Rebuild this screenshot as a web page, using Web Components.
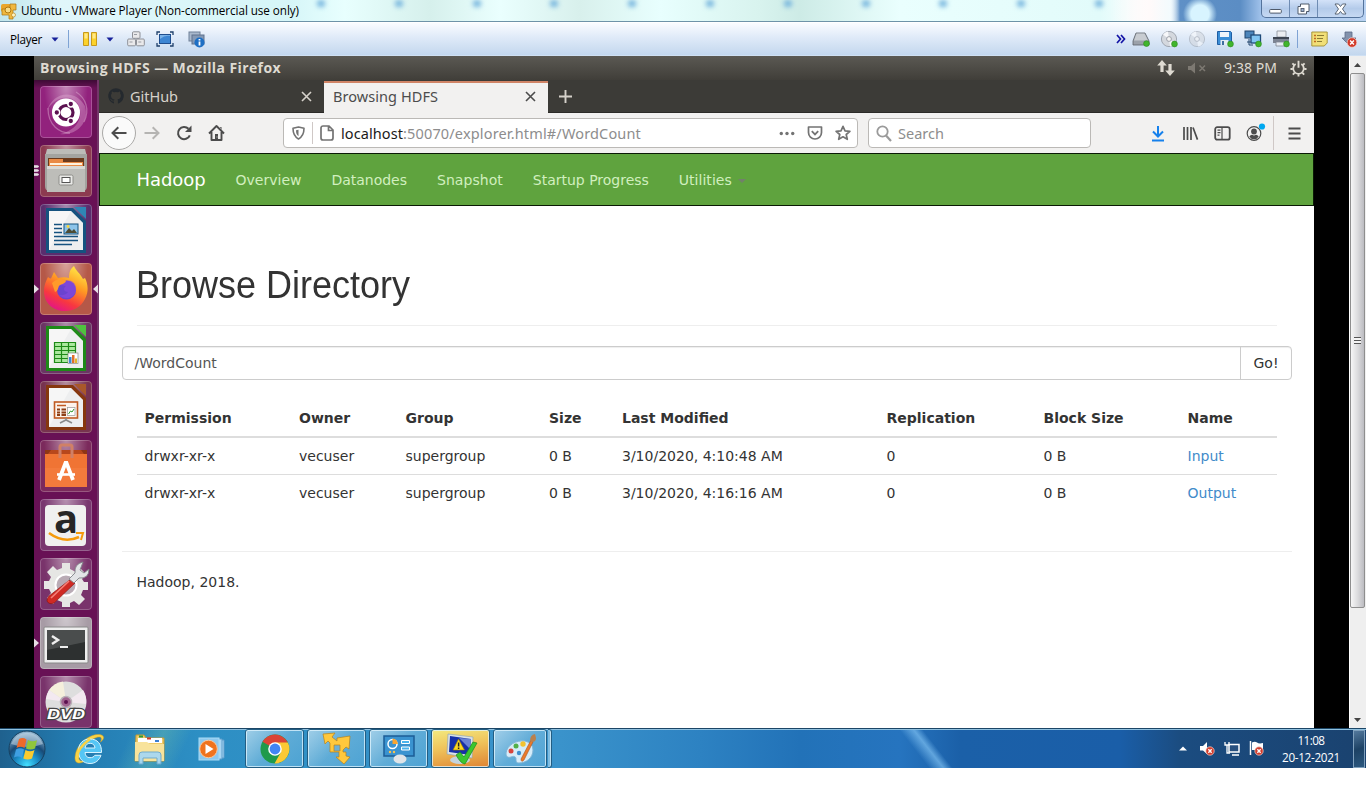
<!DOCTYPE html>
<html lang="en">
<head>
<meta charset="utf-8">
<title>Ubuntu - VMware Player</title>
<style>
html,body{margin:0;padding:0;background:#fff}
body{width:1366px;height:807px;overflow:hidden}
</style>
</head>
<body>
<win-desktop></win-desktop>
<script>
const define = (tag, html) => customElements.define(tag, class extends HTMLElement {
  constructor() {
    super();
    const t = document.createElement('template');
    t.innerHTML = html;
    this.attachShadow({ mode: 'open' }).appendChild(t.content.cloneNode(true));
  }
});

/* Label with a fixed advance width: tracking (or horizontal scale) is adjusted to fill it. */
customElements.define('fit-label', class extends HTMLElement {
  connectedCallback() {
    if (this.shadowRoot) return;
    this.attachShadow({ mode: 'open' }).innerHTML =
      '<style>:host{display:block;flex:none;white-space:pre}span{display:inline-block;transform-origin:0 50%}</style><span><slot></slot></span>';
    requestAnimationFrame(() => this.fit());
    this.fit();
  }
  fit() {
    const w = +this.getAttribute('w');
    const s = this.shadowRoot.querySelector('span');
    this.style.width = w + 'px';
    s.style.letterSpacing = '0px';
    s.style.transform = 'none';
    const real = s.getBoundingClientRect().width;
    if (!real) return;
    if (this.hasAttribute('stretch')) s.style.transform = 'scaleX(' + w / real + ')';
    else s.style.letterSpacing = (w - real) / this.textContent.length + 'px';
  }
});

const doc = (c, d, inner) => `<path d="M6 4h27l13 13v32H6z" fill="${c}"/><path d="M9 7h22l12 12v27H9z" fill="#f6f6f6"/><path d="M31 7l12 12V46H9z" fill="#e4e6e8" opacity=".5"/><path d="M34 3h12v12z" fill="${d}"/>${inner}`;
const green = (x, y) => `<circle cx="${x}" cy="${y}" r="2.9" fill="#41b52c" stroke="#2c8a1d" stroke-width=".6"/>`;
const redx = (x, y, r) => `<circle cx="${x}" cy="${y}" r="${r}" fill="#d23a2a" stroke="#f3d5cf" stroke-width=".7"/><path d="M${x-r*.4} ${y-r*.4}l${r*.8} ${r*.8}m0 ${-r*.8}l${-r*.8} ${r*.8}" stroke="#fff" stroke-width="1.4"/>`;
const disc = o => `<g opacity="${o}"><circle cx="9" cy="9" r="7.6" fill="#d4d8de" stroke="#9298a2" stroke-width=".8"/><path d="M9 9L3 4.500A7.500 7.500 0 0 1 8 1.500zM9 9l6 4.500a7.500 7.500 0 0 1-5 3z" fill="#f7f8fa"/><circle cx="9" cy="9" r="2.4" fill="#f5f5f5" stroke="#8b919b" stroke-width=".8"/></g>`;

const ICONS = {
  vmware: [16,16,`<rect x="0" y="1" width="10" height="8" rx="2" fill="#e9a62b"/><path d="M9 1h6v6h-3v9H8v-4H1V6h8z" fill="#f0b83f" stroke="#a9730e" stroke-width=".7"/><circle cx="7" cy="7" r="3" fill="#f8dc85" stroke="#b0780f"/><circle cx="12.500" cy="12" r="2" fill="#fff3c0" stroke="#b0780f" stroke-width=".6"/>`],
  down: [8,5,`<path d="M.5.5h7L4 4.500z" fill="#17209a"/>`],
  pause: [16,16,`<path d="M1.500 1.500h5v13h-5zM9.500 1.500h5v13h-5z" fill="#fcd22b" stroke="#c79a1c"/><path d="M2.500 2.500h3v5h-3zM10.500 2.500h3v5h-3z" fill="#ffe88a"/>`],
  boxes: [18,16,`<g fill="#e9e9eb" stroke="#85878d" stroke-width=".9"><rect x="5.500" y=".8" width="7.500" height="6.500" rx="1"/><rect x=".7" y="8" width="7.800" height="6.800" rx="1"/><rect x="9.500" y="8" width="7.800" height="6.800" rx="1"/></g><path d="M7 3.500h3M2.500 11h3M11.300 11h3" stroke="#999ca3"/>`],
  full: [18,16,`<rect x="3.500" y="3.500" width="11" height="9" fill="#3d86d3" stroke="#1f4e8e"/><path d="M4 8q5-4 10-3V4H4z" fill="#7ab2e8"/><path d="M1 4V1h3M14 1h3v3M17 12v3h-3M4 15H1v-3" fill="none" stroke="#20406b" stroke-width="1.300"/>`],
  info: [17,17,`<rect x="1" y="1" width="11" height="9" fill="#a9b8cc" stroke="#6f8097"/><rect x="4" y="4" width="12" height="9" fill="#8499b5" stroke="#60738e"/><circle cx="11.500" cy="11.500" r="5" fill="#1e6fc4"/><path d="M11.500 8v1.500M11.500 10.500v4" stroke="#fff" stroke-width="1.800"/>`],
  more: [10,10,`<path d="M1 1l3.500 4L1 9M5 1l3.500 4L5 9" fill="none" stroke="#1414a6" stroke-width="1.700"/>`],
  disk: [18,16,`<path d="M4 2h9l4 8v4H1v-4z" fill="#9ba1a9" stroke="#5c6168" stroke-width=".8"/><path d="M4.500 2.500h8l3.500 7H2z" fill="#c8ccd1"/>${green(14.5,12.6)}`],
  cd: [18,18,disc(1)+green(14.5,14)],
  cd2: [18,18,disc(.6)],
  floppy: [18,18,`<path d="M1.500 1.500h13l1 1v12h-14z" fill="#3b8ed6" stroke="#1f5ea4"/><path d="M4 2h9v5H4z" fill="#eef5fb"/><path d="M4.500 10h8v5h-8z" fill="#e2ebf3"/><path d="M6 11h2v4H6z" fill="#3f6fa0"/>${green(14.5,14)}`],
  net: [18,18,`<rect x="1" y="1" width="9" height="7" fill="#4d85ba" stroke="#21456d"/><path d="M5 9v6h4M3 12h4" stroke="#21456d" fill="none"/><rect x="7" y="5" width="9.500" height="8" fill="#82c5f2" stroke="#1f4a78" stroke-width="1.300"/>${green(14.5,14)}`],
  print: [18,18,`<path d="M5 1h9v6H5z" fill="#eceef2" stroke="#8a8f9a" stroke-width=".8"/><path d="M1 7h16v6H1z" fill="#7c8493"/><path d="M1 7h16v2H1z" fill="#3e4653"/><path d="M4 12h9v4H4z" fill="#e8edf5" stroke="#7e8593" stroke-width=".8"/>${green(14.5,14)}`],
  note: [17,16,`<path d="M.8 1h15.400v11l-3 3H.800z" fill="#f1df77" stroke="#a08f32" stroke-width=".9"/><path d="M3 4.500h2M3 7.500h2M3 10.500h2" stroke="#c26b20" stroke-width="1.400"/><path d="M6 4.500h7M6 7.500h6M6 10.500h5" stroke="#8b7d34"/>`],
  eject: [17,17,`<path d="M4 1h7v6h4l-7 7-7-7h3z" fill="#8292ad" stroke="#5b6a86" stroke-width=".8"/>${redx(11,11.5,4.8)}`],
  wmin: [13,12,`<rect x=".7" y="6.500" width="11.600" height="3.600" rx=".8" fill="#fff" stroke="#4f5a6a"/>`],
  wmax: [13,12,`<path d="M3.500 1h8.500v7.500h-2.500V11H1V3.500h2.500z" fill="#fff" stroke="#4f5a6a"/><rect x="4" y="5.500" width="3" height="3" fill="#9ab0cf" stroke="#4f5a6a" stroke-width=".9"/>`],
  wclose: [13,12,`<path d="M1 1h3.500l2 2.500 2-2.500H12L8.500 6l3.500 5H8.500l-2-2.600L4.500 11H1l3.500-5z" fill="#fff" stroke="#4f5a6a" stroke-width=".9"/>`],
  updown: [18,16,`<path d="M5 0l4.800 5.500H6.600V12H3.400V5.500H.200z" fill="#dfdbd2"/><path d="M13 16l4.800-5.500h-3.200V4h-3.200v6.500H8.200z" fill="#dfdbd2"/>`],
  mute: [18,12,`<path d="M0 4h3l4-3.500v11L3 8H0z" fill="#7d7972"/><path d="M11.500 3.500l5.500 5.500M17 3.500L11.500 9" stroke="#7d7972" stroke-width="1.500"/>`],
  gear: [18,18,`<path d="M6 4.300a5.600 5.600 0 1 0 6 0" fill="none" stroke="#dfdbd2" stroke-width="1.900"/><path d="M9 .8v7.500M9 15v2.500M.5 9.500H3M15 9.500h2.500M2.500 3.500l2 2M15.500 3.500l-2 2M3 15.500l1.800-1.800M15 15.500l-1.800-1.800" stroke="#dfdbd2" stroke-width="2"/>`],
  github: [16,16,`<path d="M8 .2a7.800 7.800 0 0 0-2.500 15.200c.4.100.5-.2.500-.4v-1.500c-2.200.5-2.700-.9-2.700-.9-.3-.9-.9-1.100-.9-1.100-.7-.5.100-.5.100-.5.800.1 1.200.8 1.200.8.700 1.200 1.800.9 2.300.7.100-.5.300-.9.500-1.100-1.700-.2-3.500-.9-3.500-3.900 0-.8.300-1.500.8-2.100-.1-.2-.3-1 .1-2 0 0 .6-.2 2.100.8a7.200 7.200 0 0 1 3.900 0c1.500-1 2.100-.8 2.100-.8.400 1 .2 1.800.1 2 .5.600.8 1.300.8 2.100 0 3-1.800 3.700-3.500 3.900.3.200.5.700.5 1.400V15c0 .2.100.5.600.4A7.800 7.800 0 0 0 8 .2z" fill="#24292e"/>`],
  x: [11,11,`<path d="M1 1l9 9M10 1l-9 9" stroke="currentColor" stroke-width="1.600"/>`],
  plus: [15,15,`<path d="M7.500 1v13M1 7.500h13" stroke="#d5d1ca" stroke-width="1.900"/>`],
  back: [16,14,`<path d="M15.500 7H1.500M7.300 1.200L1.500 7l5.800 5.800" fill="none" stroke="#4c4c4c" stroke-width="2"/>`],
  fwd: [16,14,`<path d="M.5 7h14M8.700 1.200L14.500 7l-5.800 5.800" fill="none" stroke="#b5b4b2" stroke-width="2"/>`],
  reload: [16,16,`<path d="M13.800 10.300A6.100 6.100 0 1 1 12.500 3.800" fill="none" stroke="#4c4c4c" stroke-width="2"/><path d="M15.500.5v6.500H9z" fill="#4c4c4c"/>`],
  home: [17,16,`<path d="M1 8.500L8.500 1 16 8.500M3.500 7v8h10V7" fill="none" stroke="#4c4c4c" stroke-width="1.900" stroke-linejoin="round"/><path d="M7 9h3v6H7zM12 2h1.500v3z" fill="#4c4c4c"/><path d="M9 11.500v1" stroke="#eee" stroke-width=".8"/>`],
  shield: [13,14,`<path d="M6.500 1L12 2.300c0 5.200-1 8.200-5.500 10.700C2 10.500 1 7.500 1 2.300z" fill="none" stroke="#737373" stroke-width="1.600" stroke-linejoin="round"/><path d="M6.500 3.700L4 4.300c0 3 .5 4.500 2.500 6z" fill="#737373"/>`],
  page: [14,16,`<path d="M3 1h6l4 4v8a2 2 0 0 1-2 2H3a2 2 0 0 1-2-2V3a2 2 0 0 1 2-2zM8.500 1v4.500H13" fill="none" stroke="#737373" stroke-width="1.700"/>`],
  dots: [16,5,`<circle cx="2.300" cy="2.500" r="1.700" fill="#737373"/><circle cx="8" cy="2.500" r="1.700" fill="#737373"/><circle cx="13.700" cy="2.500" r="1.700" fill="#737373"/>`],
  pocket: [16,15,`<path d="M1.500 1h13v5.500a6.500 6.500 0 0 1-13 0z" fill="none" stroke="#737373" stroke-width="1.700" stroke-linejoin="round"/><path d="M4.800 5.200L8 8.400l3.200-3.200" fill="none" stroke="#737373" stroke-width="1.800"/>`],
  star: [16,16,`<path d="M8 1.300l2 4.500 4.900.5-3.700 3.200 1.100 4.800L8 11.800l-4.300 2.500 1.100-4.800L1.100 6.300 6 5.800z" fill="none" stroke="#737373" stroke-width="1.700" stroke-linejoin="round"/>`],
  search: [16,17,`<circle cx="6.500" cy="6.500" r="5.200" fill="none" stroke="#9a9a9a" stroke-width="1.800"/><path d="M10 10.500l5 5.500" stroke="#9a9a9a" stroke-width="2.200"/>`],
  dl: [14,17,`<path d="M7 1v10M2 6.500l5 5 5-5M1 15.500h12" fill="none" stroke="#1681ec" stroke-width="2"/>`],
  lib: [17,15,`<path d="M2 1v13M5.500 1v13M9 1v13M11 1.500L15.500 13.600" stroke="#4c4c4c" stroke-width="1.700"/>`],
  side: [17,15,`<rect x="1.200" y="1.200" width="14.500" height="12.500" rx="2" fill="none" stroke="#4c4c4c" stroke-width="1.800"/><path d="M8 1v13M3.500 4.200h3M3.500 6.700h3M3.500 9.200h2" stroke="#4c4c4c" stroke-width="1.200"/>`],
  acct: [22,20,`<circle cx="9" cy="11.500" r="6.800" fill="none" stroke="#4c4c4c" stroke-width="1.200"/><circle cx="9" cy="9.500" r="2.900" fill="#4c4c4c"/><path d="M4.300 14.500q1.500-2 3-1.700 1.700 1.200 3.400 0 1.500-.3 3 1.700A5.400 5.400 0 0 1 4.300 14.500z" fill="#4c4c4c"/><circle cx="17" cy="4.500" r="3.100" fill="#00a8f0"/>`],
  menu: [13,13,`<path d="M.5 1.500h12M.5 6.500h12M.5 11.500h12" stroke="#4c4c4c" stroke-width="1.800"/>`],
  caret: [8,4,`<path d="M0 0h8L4 4z" fill="#777" opacity=".8"/>`],

  ubuntu: [52,52,`<path d="M7 25C12 6 35 2 45 20 50 38 35 50 20 48 38 44 44 30 38 18 28 5 12 14 7 25z" fill="#e8b9dd" opacity=".35"/><path d="M8 22C8 40 20 47 30 47M36 6C46 12 50 24 44 36" fill="none" stroke="#d9a5cc" stroke-width="1.300" opacity=".5"/><circle cx="26" cy="26.500" r="14" fill="#fff"/><circle cx="26" cy="26.500" r="7" fill="none" stroke="#5b1150" stroke-width="3.200"/><g fill="#5b1150" stroke="#fff" stroke-width="1.500"><circle cx="16.800" cy="26.500" r="2.900"/><circle cx="30.800" cy="18" r="2.900"/><circle cx="30.800" cy="35" r="2.900"/></g>`],
  files: [52,52,`<path d="M7 4h38l2 8H5z" fill="#bcbcb8"/><path d="M5 9h42v32q0 4-3 5H8q-3-1-3-5z" fill="#a3a39f"/><path d="M8 13h36v9H8z" fill="#6b3a1c"/><path d="M9 14h14v3h20v5H9z" fill="#e98a45"/><path d="M10 18h32v2H10z" fill="#fff1dc"/><path d="M7 21h38v26H7z" fill="#bdbdb9"/><path d="M7 21h38v3H7z" fill="#d9d9d5"/><rect x="19" y="30" width="14" height="10" rx="1.500" fill="#e9e9e7" stroke="#8c8c88"/><rect x="22" y="32.500" width="8" height="5" fill="#fff" stroke="#555"/>`],
  writer: [52,52,doc('#15527f','#2f86b5',`<path d="M14 20.500h8M14 24.500h8M14 28.500h8M14 32.500h24M14 36.500h24M14 40.500h18" stroke="#15527f" stroke-width="1.700"/><rect x="24" y="20" width="14" height="10" fill="#8cc4ea" stroke="#15527f"/><path d="M25 29l4-5 3 3 2-2 3 4z" fill="#4d4b33"/><circle cx="28" cy="22.500" r="1.400" fill="#f7d63c"/>`)],
  firefox: [52,52,`<defs><linearGradient id="f" x1=".8" y1="0" x2=".3" y2="1"><stop offset="0" stop-color="#fff04a"/><stop offset=".4" stop-color="#ff9a23"/><stop offset=".75" stop-color="#f8383f"/><stop offset="1" stop-color="#e31587"/></linearGradient></defs><path d="M8 14c1 1 2 1.500 3 1.500L14 9l4 6c4-1 8-1 11 0 0-5 1-9 5-12 2 5 6 7 9 13l2-1c3 6 4 14 0 21-4 8-11 12-20 12C13 48 4 40 4 28c0-6 2-10 4-14z" fill="url(#f)"/><circle cx="26.500" cy="27" r="9.500" fill="#6a43cf"/><path d="M26 18c6-2 11 3 10 10-2 8-12 9-17 4 4 1 8-1 9-3-3 0-6-3-2-6-3-1-6 0-8-2 2-2 5-3 8-3z" fill="#8a4be0" opacity=".6"/><path d="M12 20c4-4 11-6 14-2-1 3-5 3-7 5-1 2-1 5-4 6z" fill="#ff9a2a"/>`],
  calc: [52,52,doc('#1d8a17','#4fc23f',`<path d="M14 20h22v21H14z" fill="#abe89f"/><path d="M14.500 20.500h21v20h-21zM14.500 24.500h21M14.500 28.500h21M14.500 32.500h21M14.500 36.500h21M21.500 20v21M28.500 20v21" stroke="#1d8a17" stroke-width="1.200" fill="none"/><rect x="28" y="31" width="10" height="10.500" fill="#fff" stroke="#888" stroke-width=".7"/><path d="M29 35h2.500v6H29z" fill="#3c87d3"/><path d="M32 33h2.500v8H32z" fill="#e0702a"/><path d="M35 36.500h2v4.500h-2z" fill="#e0b52a"/>`)],
  impress: [52,52,doc('#86370e','#a9582a',`<rect x="14.500" y="21" width="23" height="16" fill="#fdf3eb" stroke="#c05a22" stroke-width="1.600"/><path d="M17 24.500h9" stroke="#c05a22" stroke-width="1.500"/><path d="M17 28.500h3M17 31.500h3M17 34h3M21.500 28.500h4.500M21.500 31.500h4.500M21.500 34h4.500" stroke="#8d3f16" stroke-width="1.800"/><rect x="27.500" y="26.500" width="7.500" height="8" fill="#fff" stroke="#999" stroke-width=".7"/><path d="M28.500 33l2-3 1.500 1 2-3" fill="none" stroke="#2e9a2a"/><path d="M26 37v3M20 42l6-3 6 3" stroke="#8a8a8a" stroke-width="1.600" fill="none"/>`)],
  bag: [52,52,`<path d="M5 10h42v37H5z" fill="#f07434"/><path d="M5 10h42v4H5z" fill="#b8481c"/><path d="M5 10h6l-3 4H5zM41 10h6v4h-3z" fill="#8e3516"/><path d="M5 28h42v19H5z" fill="#f58044" opacity=".5"/><path d="M20 18V7q0-2 2-2h8q2 0 2 2v11" fill="none" stroke="#d08066" stroke-width="3"/><g stroke="#fff" fill="none"><path d="M19 40l6.500-17h1L33 40" stroke-width="3.800"/><path d="M17 34.500h18" stroke-width="2.600"/></g>`],
  amazon: [52,52,`<rect x="5" y="6" width="41" height="41" rx="4" fill="#f0f0ef"/><path d="M9 34q15 11 30 4" fill="none" stroke="#f59a0c" stroke-width="2.600"/><path d="M36 34h7l-2 7" fill="none" stroke="#f59a0c" stroke-width="2"/><text x="26" y="34" text-anchor="middle" font-family="Open Sans" font-weight="700" font-size="40" fill="#262626">a</text>`],
  tools: [52,52,`<path d="M22 5h8v6l6 3 4-4 6 6-4 5 2 3h4v8h-5l-2 5 4 4-6 6-5-4-4 2v4h-8v-5l-5-2-4 4-6-6 4-5-2-4H4v-8h5l2-4-4-5 6-6 4 4 5-2z" fill="#e6e6e4"/><circle cx="26" cy="27" r="10.500" fill="#b9abb5" stroke="#fff" stroke-width="2"/><path d="M31 21l4 4-21 20q-5 2-7-2 0-3 2-5z" fill="#cf2a24" stroke="#8e1512" stroke-width=".7"/><path d="M11 40l18-17" stroke="#f58078" stroke-width="1.700"/><path d="M29 21l6-6q-1-9 8-11l-3 8 4 3 5-4q0 10-10 9l-5 5z" fill="#e2e4e6" stroke="#818589" stroke-width=".9"/>`],
  term: [52,52,`<rect x="4" y="10" width="44" height="36" rx="1" fill="#eee" stroke="#888"/><rect x="7" y="13" width="38" height="30" fill="#2d3030"/><path d="M7 13h38v12L7 33z" fill="#5b5e5e" opacity=".65"/><path d="M12 19l6 4-6 4" fill="none" stroke="#eee" stroke-width="2.500"/><path d="M20 30h8" stroke="#eee" stroke-width="2"/>`],
  dvd: [52,52,`<circle cx="26" cy="26" r="20.500" fill="#dedede"/><path d="M26 26L9 14a21 21 0 0 1 14-8.500z" fill="#f5efdc"/><path d="M26 26l17-12a21 21 0 0 1 3 14zM26 26L6 23a21 21 0 0 1 3-9z" fill="#f3e9f0"/><circle cx="26" cy="26" r="5.500" fill="#a0638f" stroke="#b9b0b7" stroke-width="1.500"/><circle cx="26" cy="26" r="2" fill="#5b1150"/><text x="26" y="43" text-anchor="middle" font-family="Liberation Sans" font-style="italic" font-weight="700" font-size="15" textLength="38" lengthAdjust="spacingAndGlyphs" fill="#fff" stroke="#444" stroke-width="2.500" paint-order="stroke">DVD</text>`],

  orb: [38,38,`<defs><radialGradient id="o" cx=".5" cy=".95" r=".9"><stop offset="0" stop-color="#44e0ff"/><stop offset=".35" stop-color="#1c8fc9"/><stop offset=".65" stop-color="#184a77"/><stop offset="1" stop-color="#8fb4cf"/></radialGradient></defs><circle cx="19" cy="19" r="18" fill="url(#o)" stroke="#16405f"/><path d="M3 14a17 17 0 0 1 32 0q-15 6-32 0z" fill="#dbe9f2" opacity=".45"/><path d="M11 9q4-2 7.500.500L16.500 18q-4-2.500-8 0z" fill="#ee6a2b"/><path d="M20 10q4 2.500 9 .3L27 18.500q-4.500 2-9 0z" fill="#8fc73c"/><path d="M8 19.500q4-2.500 8 0L14 28q-3.500-2.500-8-.5z" fill="#3f9fe2"/><path d="M17.500 20q4.500 2.500 9 0L24 28.500q-4.500 2-8.700 0z" fill="#fbcb2f"/>`],
  ie: [34,34,`<path d="M31 4C25-1 8 7 4 20c-2 7-1 11 3 11 2 0 5-1 7-3-5 2-8 1-7-4C9 14 22 4 28 5c2 .5 1.500 3 .5 5 2.500-2 4-4 2.500-6z" fill="#f8d246" stroke="#d9a31c" stroke-width=".5"/><path d="M29.500 20.500H13c.3 3.500 2 5.200 5 5.200 2.300 0 4-.9 4.800-2.400h6.200C27 28.500 23.500 31.500 18 31.500 11 31.500 6.500 26.500 6.500 19 6.500 11.500 11 7 18 7c7.500 0 11.800 5 11.500 13.500zM13 16h10c-.3-3-2-4.700-4.900-4.700S13.400 13 13 16z" fill="#55c6f5" stroke="#d9f4ff" stroke-width="1"/><path d="M5 26c0-7 6-14 13-19" fill="none" stroke="#f8d246" stroke-width="2.600"/>`],
  explorer: [34,32,`<path d="M3 2h8l2 3h18v23H2z" fill="#efcb68" stroke="#c39a35"/><path d="M5 5h24v5H5z" fill="#fff"/><path d="M6 3.500h4" stroke="#2a9a3d" stroke-width="2"/><path d="M14 5.500h4" stroke="#d33a2a" stroke-width="2"/><path d="M22 8h4" stroke="#3c7fd3" stroke-width="2"/><path d="M2 9l12 0 3 2h14v17H2z" fill="#f8e39b"/><path d="M6 31V22q0-3 3-3h16q3 0 3 3v9h-4v-6H10v6z" fill="#a8d8f2" stroke="#6aa9cf" opacity=".95"/>`],
  wmp: [28,26,`<path d="M20 3h4v20h-4M24 4h2v18h-2" fill="#a9d6f3" stroke="#5a9ccb"/><rect x="1" y="2" width="20" height="22" fill="#8cc8ee" stroke="#a9dbf5"/><circle cx="10.500" cy="13" r="8.800" fill="#f0731d" stroke="#f8c9a0"/><path d="M7.500 8l8 5-8 5z" fill="#fff"/>`],
  chrome: [30,30,`<circle cx="15" cy="15" r="14.500" fill="#1f9a4c"/><path d="M15 15L2.500 7.700A14.500 14.500 0 0 1 27.600 8z" fill="#db4437"/><path d="M15 8.500h12.900A14.500 14.500 0 0 1 14.500 29.500L21 18z" fill="#fcc934"/><circle cx="15" cy="15" r="6.800" fill="#fff"/><circle cx="15" cy="15" r="5.400" fill="#4285f4"/>`],
  vmbig: [28,33,`<g stroke="#b98318" stroke-width=".7" fill="#ffc83d"><path d="M0 2l12-1-3 4 5 4V6l13-2-1 13-3-2-3 3v2h3v4l4 1-6 7-8-7h3v-5H7v-9L5 9l-3 3z"/><path d="M11 13h6v6h-6z" fill="#6db0d6"/></g>`],
  panel: [32,30,`<path d="M1 2h30v20H1z" fill="#3a93d0" stroke="#1d5d96" stroke-width="1.500"/><circle cx="9.500" cy="10" r="4.500" fill="none" stroke="#fff" stroke-width="1.500"/><path d="M9.500 10V4.500a5.500 5.500 0 0 1 5.300 5.500z" fill="#f8a42f"/><path d="M18.500 6.500h8v3h-8zM18.500 13h8v3h-8z" fill="#4ab4ee" stroke="#fff"/><circle cx="7" cy="18" r="1.200" fill="#f8c24f"/><circle cx="11" cy="18" r="1.200" fill="#f8c24f"/><ellipse cx="17" cy="25" rx="6.500" ry="4.500" fill="#dfe4e8"/>`],
  warn: [32,32,`<ellipse cx="15" cy="27" rx="10" ry="4" fill="#c4d3dc"/><path d="M3 1l25 3-1 21-25-4z" fill="#dae3e8" stroke="#93a7b3" stroke-width=".7"/><path d="M5 3l21 3-1 16-21-3z" fill="#1730a8"/><path d="M14 5l12 1-1 10z" fill="#8fa7e6" opacity=".7"/><path d="M13.500 6l6 11H8z" fill="#ffd91f" stroke="#9a7b00" stroke-width=".6"/><path d="M13.600 9.500v4M13.600 14.500v1.500" stroke="#222" stroke-width="1.500"/><path d="M11 22l4-3 4 5 9-15 4 1-12 21q-4 0-9-9z" fill="#3bc72f" stroke="#1f8a18" stroke-width=".7"/>`],
  paint: [32,32,`<path d="M2 20C3 12 12 7 21 8q8 2 8 9c0 8-7 13-14 13-3 0-3-2-3-4 0-3-3-3-5-2-3 1-5 0-5-4z" fill="#d5ecf9" stroke="#7fb4d6"/><circle cx="7" cy="18" r="2.500" fill="#d9443c"/><circle cx="12" cy="13" r="2.500" fill="#51b04a"/><circle cx="19" cy="11" r="2.700" fill="#f2c230"/><circle cx="15" cy="20" r="2.200" fill="#3e8fce"/><path d="M27 7l2 2-9 18q-3 3-3-1z" fill="#eb7a2c" stroke="#9c4b14" stroke-width=".5"/><path d="M26 8q0-6 5-7l1 4q0 4-4 4z" fill="#b9814e"/>`],
  trayup: [8,5,`<path d="M4 .5L8 4.500H0z" fill="#fff"/>`],
  speaker: [15,15,`<path d="M0 5h3l4-4v12L3 9.500H0z" fill="#fff"/>${redx(10,10,4.2)}`],
  lan: [16,15,`<rect x="5" y="3.500" width="10" height="7.500" fill="#28507f" stroke="#fff" stroke-width="1.500"/><path d="M8 14h7M1 1v3h4V1M3 4v8h3" stroke="#fff" stroke-width="1.300" fill="none"/>`],
  flag: [15,15,`<path d="M1.500 0v14" stroke="#fff" stroke-width="1.500"/><path d="M3 1.500q3-1.500 5 0 2 1.500 6 .5v7H3z" fill="#fff"/>${redx(10,10,4.2)}`],
  sup: [7,4,`<path d="M3.500 0L7 4H0z" fill="#444"/>`],
  sdown: [7,4,`<path d="M3.500 4L0 0h7z" fill="#444"/>`]
};

customElements.define('ui-icon', class extends HTMLElement {
  connectedCallback() {
    const [w, h, body] = ICONS[this.getAttribute('name')];
    const W = this.getAttribute('w') || w, H = this.getAttribute('h') || h;
    const r = this.shadowRoot || this.attachShadow({ mode: 'open' });
    r.innerHTML = `<style>:host{display:flex;flex:none;align-items:center;justify-content:center}svg{display:block;flex:none;overflow:visible}</style><svg width="${W}" height="${H}" viewBox="0 0 ${w} ${h}">${body}</svg>`;
  }
});

define('vm-titlebar', `<style>
:host{display:flex;align-items:center;height:22px;box-sizing:border-box;border-bottom:1px solid #6e93a8;overflow:hidden;color:#000;font:11.700px/21px "Open Sans",sans-serif;
background:
radial-gradient(circle at 1200px 14px,#d8f4ff 0 9px,transparent 17px),
radial-gradient(ellipse at 1114px 17px,#8ed3ea 0 3px,transparent 10px),
radial-gradient(ellipse at 882px 17px,#d392d8 0 3px,transparent 9px),
radial-gradient(ellipse at 729px 17px,#b9cff0 0 2px,transparent 8px),
radial-gradient(ellipse at 493px 17px,#bdaedf 0 3px,transparent 10px),
radial-gradient(ellipse at 416px 16px,#9bc4f0 0 3px,transparent 11px),
linear-gradient(90deg,transparent 1110px,#fffafa 1150px,#f4fbfd 1168px,transparent 1180px),
linear-gradient(90deg,#c2e6ec 0,#e0f6fa 60px,#d6f6f8 290px,#e8fffe 345px,#d6f0ec 430px,#eafffe 500px,#d8f0ec 580px,#e8fffe 660px,#d8f3ee 760px,#cdebe6 800px,#eafffe 900px,#e2fbfa 1100px,#fff 1150px,#f1fbff 1170px,#5f90c6 1180px,#5b8dc4 1240px,#a3c4ec 1262px,#b9d2f2 1366px)}
.spots{display:flex;align-self:flex-start;flex:1;gap:69.800px;padding-left:18px}
.spots i{flex:none;width:8px;height:7px;border-radius:50%;background:#6fb0dc;filter:blur(2.500px)}
ui-icon{width:18px;margin-right:3px}
.ctl{display:flex;align-self:flex-start;flex:none;width:101px;height:17px;border:1px solid #54739c;border-top:0;border-radius:0 0 5px 5px;margin-right:2px;background:linear-gradient(#d3e2f8,#b4cbea 50%,#c6d9f3)}
.ctl ui-icon{margin:0;flex:0 0 27px;border-right:1px solid #6f8cb3}
.ctl ui-icon:last-child{flex:1;border:0}
</style><ui-icon name="vmware"></ui-icon><fit-label w="278">Ubuntu - VMware Player (Non-commercial use only)</fit-label><div class="spots"><i></i><i></i><i></i><i></i><i></i><i></i><i></i><i></i><i></i><i></i><i></i></div>
<div class="ctl"><ui-icon name="wmin"></ui-icon><ui-icon name="wmax"></ui-icon><ui-icon name="wclose"></ui-icon></div>`);

define('vm-toolbar', `<style>
:host{display:flex;align-items:center;height:34px;box-sizing:border-box;border-top:1px solid #fff;border-bottom:1px solid #cfe0f3;background:linear-gradient(#fafcff,#dfeaf8 45%,#c3d7ee);padding:0 0 0 10px;font:11.700px/32px "Open Sans",sans-serif;color:#000}
hr{border:0;margin:0;width:1px;height:18px;background:#7fa3d4;flex:none}
.g{flex:1}
</style><fit-label w="32">Player</fit-label><ui-icon name="down" style="width:26px"></ui-icon><hr>
<ui-icon name="pause" style="width:42px"></ui-icon><ui-icon name="down" style="margin:0 13px 0 -5px"></ui-icon><ui-icon name="boxes" style="width:18px"></ui-icon><ui-icon name="full" style="width:40px"></ui-icon><ui-icon name="info" style="width:22px"></ui-icon><div class="g"></div>
<ui-icon name="more" style="width:13px"></ui-icon><ui-icon name="disk" style="width:28px"></ui-icon><ui-icon name="cd" style="width:28px"></ui-icon><ui-icon name="cd2" style="width:28px"></ui-icon><ui-icon name="floppy" style="width:28px"></ui-icon><ui-icon name="net" style="width:28px"></ui-icon><ui-icon name="print" style="width:28px"></ui-icon><hr style="margin:0 7px 0 2px"><ui-icon name="note" style="width:28px"></ui-icon><ui-icon name="eject" style="width:33px"></ui-icon>`);

define('ubuntu-panel', `<style>
:host{display:flex;align-items:center;height:24px;background:linear-gradient(#5b5953,#403e39);padding:0 7px 0 6px;color:#dfdbd2;font:14px/24px "Noto Sans",sans-serif}
.t{font-weight:700;font-size:14px;font-family:"Open Sans",sans-serif}
</style><fit-label class="t" w="241">Browsing HDFS — Mozilla Firefox</fit-label><div style="flex:1"></div><ui-icon name="updown"></ui-icon><ui-icon name="mute" style="margin:0 18px 0 13px"></ui-icon><fit-label w="53">9:38 PM</fit-label><ui-icon name="gear" w="17" h="17" style="margin-left:13px"></ui-icon>`);

customElements.define('launcher-item', class extends HTMLElement {
  connectedCallback() {
    const m = this.getAttribute('mark') || '';
    const r = this.shadowRoot || this.attachShadow({ mode: 'open' });
    r.innerHTML = `<style>:host{display:grid;grid-template-columns:6px 52px 7px;height:52px;align-items:center}
.t{width:52px;height:52px;box-sizing:border-box;border-radius:4px;background:radial-gradient(ellipse at 50% 0,rgba(255,255,255,.45),rgba(255,255,255,0) 60%),var(--tile,#79366f);box-shadow:inset 0 0 0 1px rgba(255,255,255,.22)}
svg{display:block}</style>
<svg width="6" height="14">${m.includes('l') ? '<path d="M0 2.500l5 4.500-5 4.500z" fill="#e6dde4"/>' : m.includes('m') ? '<path d="M0 1.500h3.500l1.500 1-1.500 1H0zM0 5.500h3.500l1.500 1-1.500 1H0zM0 9.500h3.500l1.500 1-1.500 1H0z" fill="#e6dde4" stroke="#e6dde4" stroke-width=".6"/>' : ''}</svg>
<div class="t"><ui-icon name="${this.getAttribute('icon')}"></ui-icon></div>
<svg width="7" height="14">${m.includes('r') ? '<path d="M6 2.500L1 7l5 4.500z" fill="#e6dde4"/>' : ''}</svg>`;
  }
});

define('unity-launcher', `<style>
:host{display:flex;flex-direction:column;gap:7px;width:65px;box-sizing:border-box;padding-top:6px;overflow:hidden;background:linear-gradient(#3d0b35,#681155 8px,#681155);box-shadow:inset -2px 0 0 #74366a}
launcher-item{flex:none}
</style>
<launcher-item icon="ubuntu" style="--tile:#92227d"></launcher-item>
<launcher-item icon="files" mark="m" style="--tile:#8c3a50"></launcher-item>
<launcher-item icon="writer" style="--tile:#5a2d6e"></launcher-item>
<launcher-item icon="firefox" mark="lr" style="--tile:#b55848"></launcher-item>
<launcher-item icon="calc" style="--tile:#6a3563"></launcher-item>
<launcher-item icon="impress" style="--tile:#77334f"></launcher-item>
<launcher-item icon="bag" style="--tile:#7b2a5c"></launcher-item>
<launcher-item icon="amazon" style="--tile:#79366f"></launcher-item>
<launcher-item icon="tools" style="--tile:#79336b"></launcher-item>
<launcher-item icon="term" mark="l" style="--tile:#a79ba5"></launcher-item>
<launcher-item icon="dvd" style="--tile:#79336b"></launcher-item>`);

define('fx-tabs', `<style>
:host{display:flex;height:33px;background:#3c3b37;box-shadow:inset 0 -1px 0 #2b2a27;font:14.500px/30px "Noto Sans",sans-serif;color:#d6d2cb}
.t{display:flex;align-items:center;box-sizing:border-box;width:225px;padding:0 12px 1px 9px}
.t ui-icon:last-child{margin-left:auto}
.a{background:linear-gradient(#3c3b37 0 1px,#d08466 1px 3px,#f2f1f0 3px);color:#4c4c4c;width:224px}
ui-icon[name=x]{padding-top:1px}
</style><div class="t"><ui-icon name="github" style="margin-right:6px"></ui-icon><fit-label w="48">GitHub</fit-label><ui-icon name="x"></ui-icon></div>
<div class="t a"><fit-label w="105">Browsing HDFS</fit-label><ui-icon name="x"></ui-icon></div><ui-icon name="plus" style="width:34px;padding-bottom:1px"></ui-icon>`);

define('fx-toolbar', `<style>
:host{display:flex;align-items:center;height:40px;background:#f2f1f0;font:14.500px/28px "Noto Sans",sans-serif;color:#8d8d8d;padding-left:3px}
.back{width:32px;height:32px;border:1px solid #aaa9a7;border-radius:50%;background:#fafafa;display:flex;align-items:center;justify-content:center;flex:none}
.f{display:flex;align-items:center;box-sizing:border-box;height:30px;border:1px solid #bbb9b6;border-radius:4px;background:#fff;flex:none}
hr{border:0;margin:0;width:1px;background:#cfc8c6}
b{font-weight:400;color:#1a1a1a}
</style><div class="back"><ui-icon name="back"></ui-icon></div><ui-icon name="fwd" style="width:32px"></ui-icon><ui-icon name="reload" style="width:32px"></ui-icon><ui-icon name="home" style="width:32px"></ui-icon>
<div class="f" style="width:575px;margin-left:51px;padding-right:6px"><ui-icon name="shield" style="width:28px"></ui-icon><hr style="height:22px"><ui-icon name="page" style="width:28px"></ui-icon><fit-label w="62"><b>localhost</b></fit-label><fit-label w="238">:50070/explorer.html#/WordCount</fit-label><div style="flex:1"></div><ui-icon name="dots" style="width:28px"></ui-icon><ui-icon name="pocket" style="width:28px"></ui-icon><ui-icon name="star" style="width:28px;margin-right:-6px"></ui-icon></div>
<div class="f" style="width:223px;margin-left:10px"><ui-icon name="search" style="width:29px"></ui-icon><fit-label w="46">Search</fit-label></div>
<div style="flex:1"></div><ui-icon name="dl" style="width:32px"></ui-icon><ui-icon name="lib" style="width:32px"></ui-icon><ui-icon name="side" style="width:32px"></ui-icon><ui-icon name="acct" style="width:35px;margin-top:-3px;"></ui-icon><hr style="height:34px"><ui-icon name="menu" style="width:40px"></ui-icon>`);

define('hadoop-nav', `<style>
:host{display:flex;align-items:center;height:53px;box-sizing:border-box;border:1px solid #0a1a05;background:#5fa33e;padding-left:36.500px;color:#d1efbf;font:14px/20px "DejaVu Sans",sans-serif}
.b{font-size:18px;color:#fff;margin-right:30px}
.i{margin-right:30px}
</style><fit-label class="b" w="69">Hadoop</fit-label><fit-label class="i" w="66">Overview</fit-label><fit-label class="i" w="75.500">Datanodes</fit-label><fit-label class="i" w="65.800">Snapshot</fit-label><fit-label class="i" w="116">Startup Progress</fit-label><fit-label w="53">Utilities</fit-label><ui-icon name="caret" style="margin:2px 0 0 6px"></ui-icon>`);

define('file-table', `<style>
:host{display:block}
table{border-collapse:collapse;table-layout:fixed;width:1140px;color:#333}
th,td{padding:8px 0 8px 7.500px;text-align:left;line-height:20px;font-size:14px}
thead th{border-bottom:2px solid #ddd;padding-bottom:8px}
td{border-top:1px solid #ddd}
a{color:#428bca}
</style><table><colgroup><col style="width:154.500px"><col style="width:106.500px"><col style="width:143.500px"><col style="width:73px"><col style="width:264.500px"><col style="width:157px"><col style="width:144px"><col></colgroup>
<thead><tr><th>Permission<th>Owner<th>Group<th>Size<th>Last Modified<th>Replication<th>Block Size<th>Name</tr></thead>
<tbody><tr><td>drwxr-xr-x<td>vecuser<td>supergroup<td>0 B<td>3/10/2020, 4:10:48 AM<td>0<td>0 B<td><a>Input</a></tr>
<tr><td>drwxr-xr-x<td>vecuser<td>supergroup<td>0 B<td>3/10/2020, 4:16:16 AM<td>0<td>0 B<td><a>Output</a></tr></tbody></table>`);

define('hadoop-page', `<style>
:host{display:block;background:#fff;font:14px/20px "DejaVu Sans",sans-serif;color:#333;padding:57px 22px 0 23px}
.h{margin:0 15px 20px;height:62px;border-bottom:1px solid #eee}
h1{margin:0 0 0 -1px;font:400 38px/44px "Liberation Sans",sans-serif;color:#333}
.in{display:flex;height:34px;box-sizing:border-box;border:1px solid #ccc;border-radius:4px;box-shadow:inset 0 1px 1px rgba(0,0,0,.07);line-height:32px;color:#555}
.in span{flex:1;padding-left:11.500px}
.in b{width:50px;border-left:1px solid #ccc;text-align:center;font-weight:400;color:#333}
file-table{margin:20px 15px 0}
.l{margin-top:40px;border-top:1px solid #eee;padding:20px 0 0 14.500px}
</style><div class="h"><h1><fit-label w="274" stretch>Browse Directory</fit-label></h1></div>
<div class="in"><span>/WordCount</span><b>Go!</b></div>
<file-table></file-table><div class="l">Hadoop, 2018.</div>`);

define('vm-scroll', `<style>
:host{display:flex;flex-direction:column;align-items:center;width:17px;background:#efefef;box-shadow:inset 1px 0 0 #fff}
ui-icon{height:17px}
.th{width:13px;height:533px;border:1px solid #8e8e8e;border-radius:2px;background:linear-gradient(90deg,#f6f6f6,#dcdcde 50%,#bcbcc1);display:flex;align-items:center;justify-content:center;flex:none}
.th i{width:7px;height:7px;background:repeating-linear-gradient(#555 0 1px,#f4f4f4 1px 3px)}
</style><ui-icon name="sup"></ui-icon><div class="th"><i></i></div><div style="flex:1"></div><ui-icon name="sdown"></ui-icon>`);

define('win-taskbar', `<style>
:host{display:flex;align-items:center;height:40px;box-sizing:border-box;border-top:1px solid #1c4666;box-shadow:inset 0 1px 0 #8fc1e0;color:#fff;font:11.700px/17px "Open Sans",sans-serif;overflow:hidden;
background:linear-gradient(52deg,transparent 38%,rgba(140,205,250,.6) 49%,transparent 56%) 880px 0/100px 40px no-repeat,
linear-gradient(115deg,transparent 120px,rgba(120,200,170,.35) 150px,transparent 175px),
linear-gradient(90deg,#1f618e,#237bb0 70px,#2d8fc4 200px,#3a93cb 560px,#2d82c2 700px,#2272b8 800px,#2674bf 900px,#1b60a8 960px,#1a5ea8 1120px,#1b4c80 1180px,#1a426f 1366px)}
.b{display:flex;align-items:center;justify-content:center;flex:none;width:57px;height:37px;box-sizing:content-box;border:1px solid #225d83;border-radius:3px;box-shadow:inset 0 0 0 1px rgba(225,245,255,.75);background:linear-gradient(135deg,rgba(220,240,250,.65),rgba(125,190,225,.6) 50%,rgba(95,175,220,.6));margin-right:3px}
.w{background:linear-gradient(170deg,#f3ea80,#efc25a 45%,#df8433)}
.s{width:3px;height:37px;border:1px solid #225d83;border-left:0;border-radius:0 3px 3px 0;margin-left:-2px;box-shadow:inset -1px 0 0 #bfe2f5;background:#7fbce0;flex:none}
.c{display:flex;flex-direction:column;align-items:center;width:72px;margin:0 6px}
.d{width:12px;height:38px;border:1px solid #7fa0bd;background:linear-gradient(160deg,#53789c,#1d4265 50%,#2c587f);box-sizing:border-box;flex:none;margin-right:1px}
</style><ui-icon name="orb" style="width:54px"></ui-icon><ui-icon name="ie" style="width:69px"></ui-icon><ui-icon name="explorer" style="width:54px"></ui-icon><ui-icon name="wmp" style="width:69px"></ui-icon>
<div class="b" style="margin-left:-1px"><ui-icon name="chrome"></ui-icon></div><div class="b"><ui-icon name="vmbig"></ui-icon></div><div class="b"><ui-icon name="panel"></ui-icon></div><div class="b w"><ui-icon name="warn"></ui-icon></div><div class="b" style="width:52px"><ui-icon name="paint"></ui-icon></div><div class="s"></div>
<div style="flex:1"></div><ui-icon name="trayup" style="width:24px"></ui-icon><ui-icon name="speaker" style="width:25px"></ui-icon><ui-icon name="lan" style="width:24px"></ui-icon><ui-icon name="flag" style="width:25px"></ui-icon>
<div class="c"><fit-label w="27">11:08</fit-label><fit-label w="58">20-12-2021</fit-label></div><div class="d"></div>`);

define('guest-screen', `<style>
:host{display:grid;grid-template:24px 648px / 65px 1215px;width:1280px}
ubuntu-panel{grid-column:1/3}
.fx{display:flex;flex-direction:column;background:#fff;overflow:hidden}
hadoop-page{flex:1}
hadoop-nav,fx-tabs,fx-toolbar{flex:none}
</style><ubuntu-panel></ubuntu-panel><unity-launcher></unity-launcher><div class="fx"><fx-tabs></fx-tabs><fx-toolbar></fx-toolbar><hadoop-nav></hadoop-nav><hadoop-page></hadoop-page></div>`);

define('win-desktop', `<style>
:host{display:flex;flex-direction:column;width:1366px;height:807px;background:#fff}
vm-titlebar,vm-toolbar,win-taskbar{flex:none}
.m{display:flex;height:672px;background:#000;padding-left:34px;flex:none}
guest-screen{flex:none;margin-right:35px}
</style><vm-titlebar></vm-titlebar><vm-toolbar></vm-toolbar><div class="m"><guest-screen></guest-screen><vm-scroll></vm-scroll></div><win-taskbar></win-taskbar>`);
</script>
</body>
</html>
